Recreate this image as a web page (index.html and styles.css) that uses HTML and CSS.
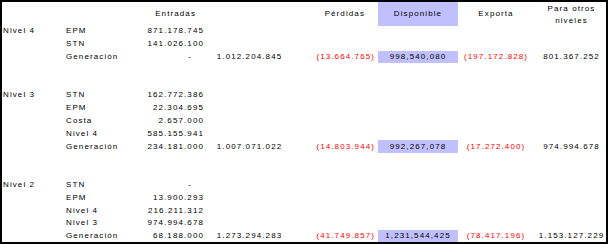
FILE: index.html
```html
<!DOCTYPE html>
<html lang="es">
<head>
<meta charset="utf-8">
<title>Balance por nivel</title>
<link rel="stylesheet" href="styles.css">
</head>
<body>
<div class="sheet">
  <div class="grid">
    <!-- header -->
    <div class="hd"></div>
    <div class="hd"></div>
    <div class="hd hd-entradas">Entradas</div>
    <div class="hd"></div>
    <div class="hd hd-perdidas">Pérdidas</div>
    <div class="hd hd-disp">Disponible</div>
    <div class="hd hd-center">Exporta</div>
    <div class="hd hd-center hd-two">Para otros<br>niveles</div>

    <!-- Nivel 4 -->
    <div class="lvl">Nivel 4</div><div class="lab">EPM</div><div class="val">871.178.745</div><div></div><div></div><div></div><div></div><div></div>
    <div></div><div class="lab">STN</div><div class="val">141.026.100</div><div></div><div></div><div></div><div></div><div></div>
    <div></div><div class="lab">Generación</div><div class="val dash">-</div><div class="tot">1.012.204.845</div><div class="neg">(13.664.765)</div><div class="disp">998,540,080</div><div class="exp">(197.172.828)</div><div class="oth">801.367.252</div>
    <div class="blank"></div>
    <div class="blank"></div>

    <!-- Nivel 3 -->
    <div class="lvl">Nivel 3</div><div class="lab">STN</div><div class="val">162.772.386</div><div></div><div></div><div></div><div></div><div></div>
    <div></div><div class="lab">EPM</div><div class="val">22.304.695</div><div></div><div></div><div></div><div></div><div></div>
    <div></div><div class="lab">Costa</div><div class="val">2.657.000</div><div></div><div></div><div></div><div></div><div></div>
    <div></div><div class="lab">Nivel 4</div><div class="val">585.155.941</div><div></div><div></div><div></div><div></div><div></div>
    <div></div><div class="lab">Generación</div><div class="val">234.181.000</div><div class="tot">1.007.071.022</div><div class="neg">(14.803.944)</div><div class="disp">992,267,078</div><div class="exp">(17.272.400)</div><div class="oth">974.994.678</div>
    <div class="blank"></div>
    <div class="blank"></div>

    <!-- Nivel 2 -->
    <div class="lvl">Nivel 2</div><div class="lab">STN</div><div class="val dash">-</div><div></div><div></div><div></div><div></div><div></div>
    <div></div><div class="lab">EPM</div><div class="val">13.900.293</div><div></div><div></div><div></div><div></div><div></div>
    <div></div><div class="lab">Nivel 4</div><div class="val">216.211.312</div><div></div><div></div><div></div><div></div><div></div>
    <div></div><div class="lab">Nivel 3</div><div class="val">974.994.678</div><div></div><div></div><div></div><div></div><div></div>
    <div></div><div class="lab">Generación</div><div class="val">68.188.000</div><div class="tot">1.273.294.283</div><div class="neg">(41.749.857)</div><div class="disp">1,231,544,425</div><div class="exp">(78.417.196)</div><div class="oth">1.153.127.229</div>
  </div>
</div>
</body>
</html>
```

FILE: styles.css
```css
html, body {
  margin: 0;
  padding: 0;
  background: #ffffff;
}

body {
  font-family: "Liberation Sans", Arial, sans-serif;
  font-size: 8px;
  letter-spacing: 1.1px;
  color: #000000;
}

.sheet {
  width: 604px;
  height: 240px;
  border: 2px solid #000000;
  overflow: hidden;
}

.grid {
  display: grid;
  grid-template-columns: 62px 76px 65px 89px 84px 80px 76px 72px;
  grid-template-rows: 23px;
  grid-auto-rows: 12.8px;
}

.grid > div {
  display: flex;
  align-items: center;
  white-space: nowrap;
  line-height: 12px;
}

.hd {
  height: 23px;
}

.hd-entradas {
  justify-content: flex-end;
  padding-right: 9px;
}

.hd-perdidas {
  justify-content: flex-end;
  padding-right: 13px;
}

.hd-disp {
  justify-content: center;
  background: #c0c0ff;
  height: 24px;
}

.hd-center {
  justify-content: center;
  text-align: center;
}

.hd-two {
  padding-left: 3px;
  line-height: 12px;
  align-items: flex-start;
  padding-top: 1px;
}

.lvl {
  padding-left: 1px;
}

.lab {
  padding-left: 2px;
}

.val {
  justify-content: flex-end;
  padding-right: 1px;
}

.val.dash {
  padding-right: 13px;
}

.tot {
  justify-content: center;
}

.neg {
  justify-content: flex-end;
  padding-right: 3px;
  color: #ff0000;
}

.disp {
  justify-content: center;
  background: #c0c0ff;
}

.exp {
  justify-content: center;
  color: #ff0000;
}

.oth {
  justify-content: center;
  padding-left: 3px;
}

.blank {
  grid-column: 1 / -1;
}
```
